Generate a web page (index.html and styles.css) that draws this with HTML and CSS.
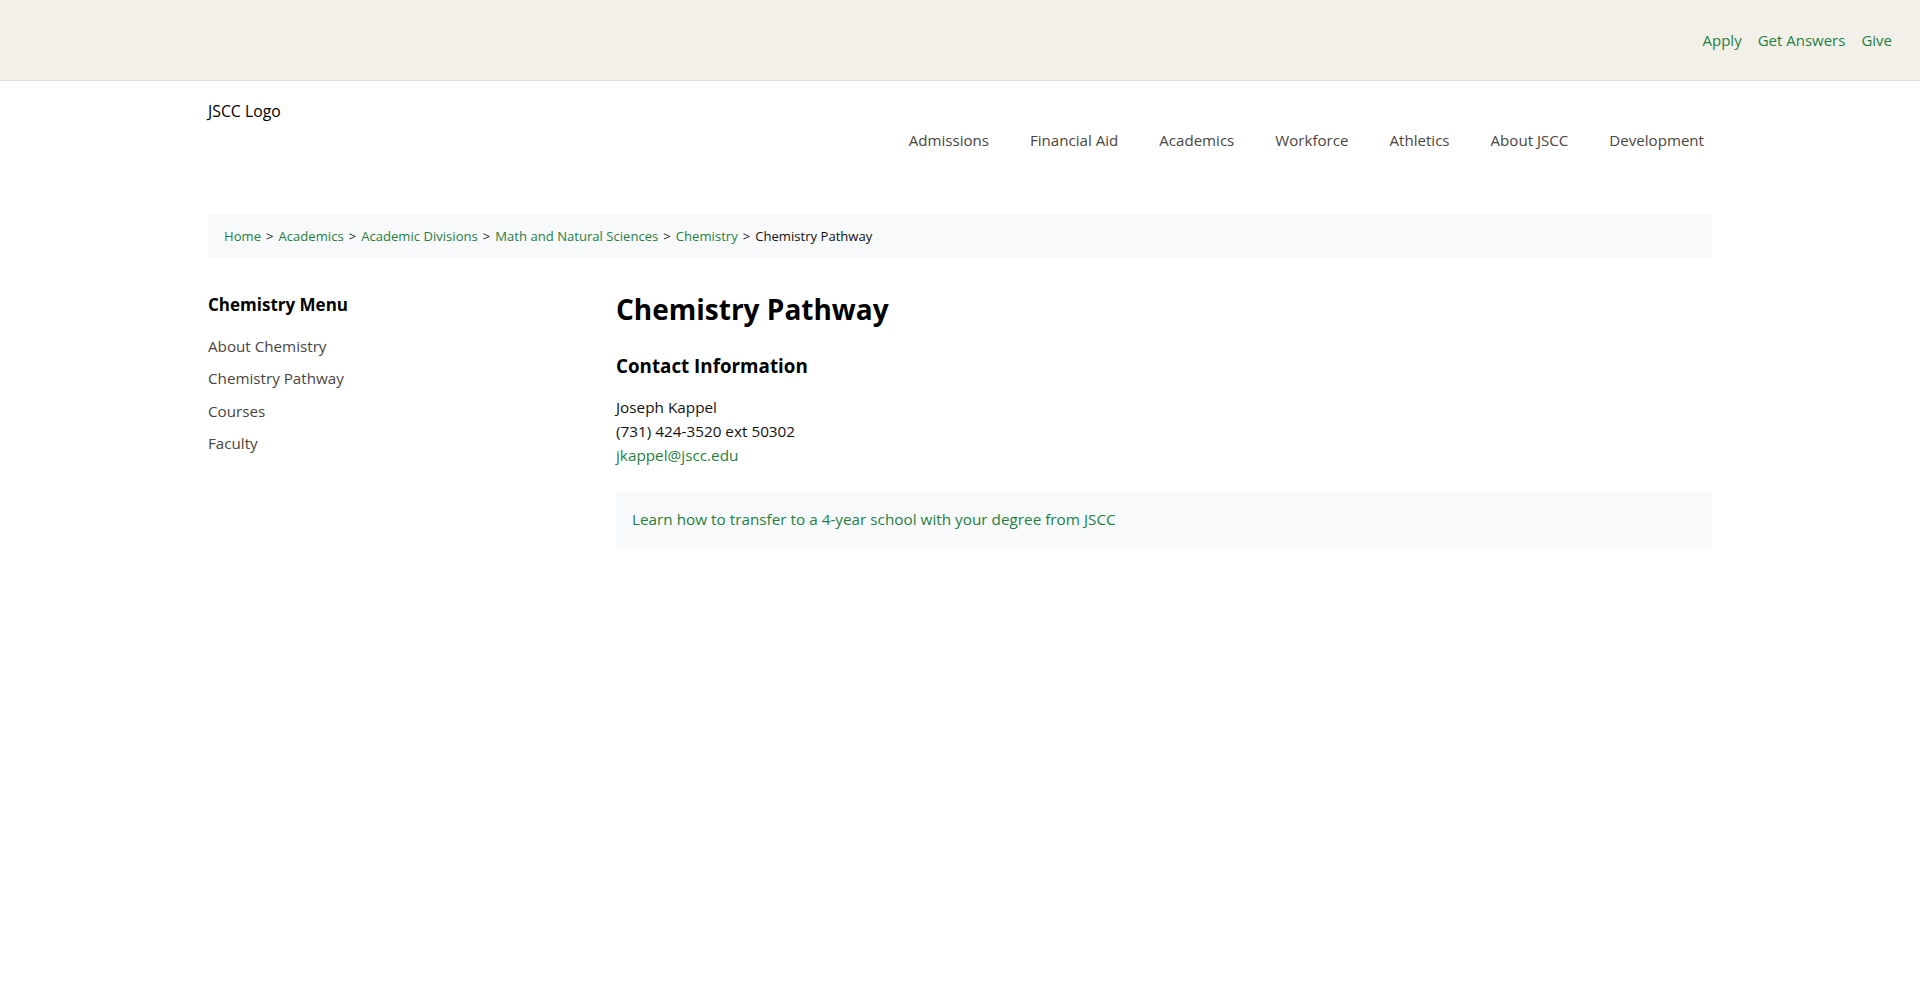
FILE: index.html
```html
<!DOCTYPE html>
<html lang="en">
<head>
<meta charset="utf-8">
<title>Chemistry Pathway | JSCC</title>
<link rel="stylesheet" href="styles.css">
</head>
<body>
<div class="topbar">
  <a href="#" class="toplink">Apply</a>
  <a href="#" class="toplink">Get Answers</a>
  <a href="#" class="toplink">Give</a>
</div>
<div class="container">
  <header class="header">
    <div class="logo">JSCC Logo</div>
    <nav class="nav">
      <a href="#" class="nav-link">Admissions</a>
      <a href="#" class="nav-link">Financial Aid</a>
      <a href="#" class="nav-link">Academics</a>
      <a href="#" class="nav-link">Workforce</a>
      <a href="#" class="nav-link">Athletics</a>
      <a href="#" class="nav-link">About JSCC</a>
      <a href="#" class="nav-link">Development</a>
    </nav>
  </header>
  <div class="breadcrumb">
    <a href="#" class="crumb">Home</a><span class="sep">&gt;</span><a href="#" class="crumb">Academics</a><span class="sep">&gt;</span><a href="#" class="crumb">Academic Divisions</a><span class="sep">&gt;</span><a href="#" class="crumb">Math and Natural Sciences</a><span class="sep">&gt;</span><a href="#" class="crumb">Chemistry</a><span class="sep">&gt;</span><span class="current">Chemistry Pathway</span>
  </div>
  <div class="layout">
    <aside class="sidebar">
      <h2 class="side-title">Chemistry Menu</h2>
      <ul class="side-list">
        <li><a href="#" class="side-link">About Chemistry</a></li>
        <li><a href="#" class="side-link">Chemistry Pathway</a></li>
        <li><a href="#" class="side-link">Courses</a></li>
        <li><a href="#" class="side-link">Faculty</a></li>
      </ul>
    </aside>
    <main class="main">
      <h1 class="page-title">Chemistry Pathway</h1>
      <h2 class="section-title">Contact Information</h2>
      <div class="contact">
        <div class="contact-line">Joseph Kappel</div>
        <div class="contact-line">(731) 424-3520 ext 50302</div>
        <div class="contact-line"><a href="#" class="green-link">jkappel@jscc.edu</a></div>
      </div>
      <div class="transfer">
        <a href="#" class="green-link">Learn how to transfer to a 4-year school with your degree from JSCC</a>
      </div>
    </main>
  </div>
</div>
</body>
</html>
```
FILE: styles.css
```css
* { box-sizing: border-box; }
html, body { margin: 0; padding: 0; }
body {
  font-family: "Open Sans", "Noto Sans", sans-serif;
  font-size: 15.3px;
  line-height: 24px;
  color: #111;
  background: #fff;
}
a { text-decoration: none; }

.topbar {
  height: 81px;
  background: #f3f0e9;
  border-bottom: 1px solid #e2ded7;
  display: flex;
  justify-content: flex-end;
  align-items: center;
  gap: 16px;
  padding: 0 28px 1px 0;
}
.toplink {
  color: #1f7f40;
  font-size: 15px;
  line-height: 24px;
}

.container {
  max-width: 1536px;
  margin: 0 auto;
  padding: 0 16px;
}

.header {
  display: flex;
  justify-content: space-between;
  align-items: flex-start;
  padding-top: 18px;
}
.logo {
  font-size: 15.8px;
  line-height: 24px;
  color: #000;
}
.nav {
  display: flex;
  gap: 25px;
  margin-top: 29px;
}
.nav-link {
  padding: 0 8px;
  font-size: 15.1px;
  line-height: 24px;
  color: #4a4540;
}

.breadcrumb {
  margin-top: 62px;
  background: #f8f9fa;
  padding: 12px 16px;
  font-size: 13.1px;
  line-height: 20px;
}
.crumb { color: #1f7f40; }
.sep { color: #222; margin: 0 5px; }
.current { color: #111; }

.layout {
  display: grid;
  grid-template-columns: 376px 1fr;
  column-gap: 32px;
  margin-top: 34px;
}

.side-title {
  margin: 1px 0 13px;
  font-size: 17px;
  line-height: 24px;
  font-weight: 700;
  color: #000;
}
.side-list {
  list-style: none;
  margin: 0;
  padding: 0;
}
.side-list li { padding: 4px 0; line-height: 24.3px; }
.side-link {
  color: #4a4540;
  font-size: 15.2px;
}

.page-title {
  margin: 0 0 28px;
  font-size: 28px;
  line-height: 34px;
  font-weight: 700;
  color: #000;
}
.section-title {
  margin: 0 0 16.5px;
  font-size: 18.8px;
  line-height: 24px;
  font-weight: 700;
  color: #000;
}
.contact-line {
  line-height: 24px;
  color: #111;
}
.green-link { color: #1f7f40; }
.transfer {
  margin-top: 24px;
  background: #f8f9fa;
  padding: 16px;
  line-height: 24px;
}
```
